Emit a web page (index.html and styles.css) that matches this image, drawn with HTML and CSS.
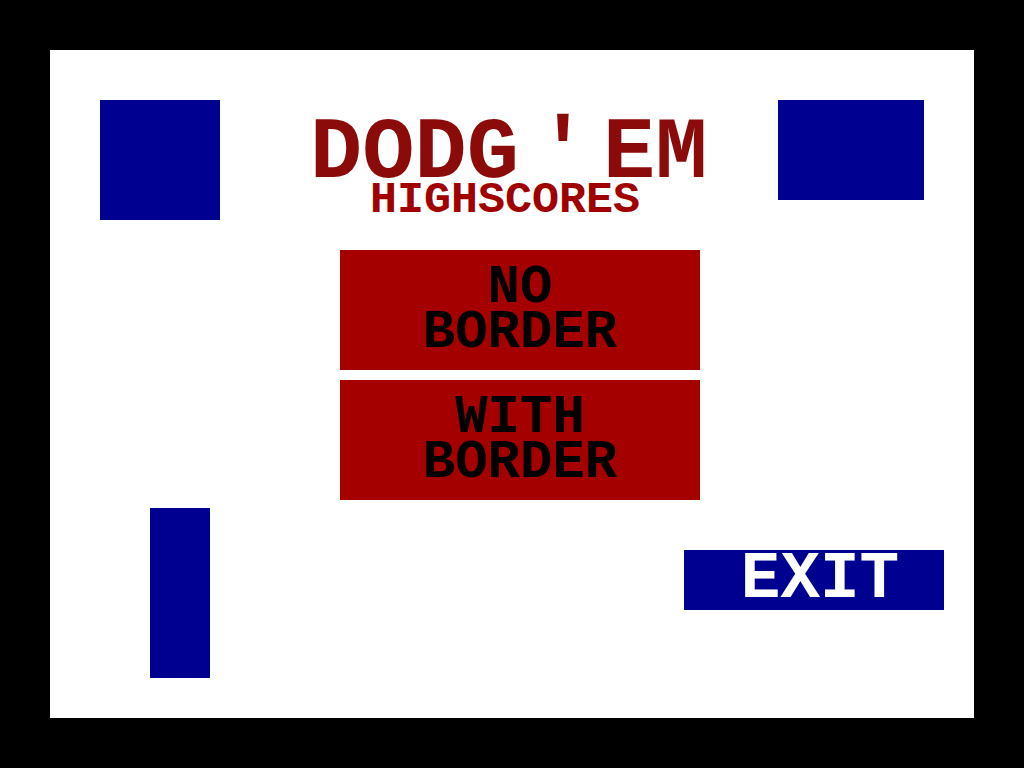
FILE: index.html
```html
<!DOCTYPE html>
<html>
<head>
<meta charset="utf-8">
<link rel="stylesheet" href="styles.css">
</head>
<body>
<div class="panel">
  <div class="block block-a"></div>
  <div class="block block-b"></div>
  <div class="block block-c"></div>
  <header class="header">
    <h1 class="title"><span>DODG</span><span class="apos">'</span><span class="em">EM</span></h1>
    <h2 class="subtitle">HIGHSCORES</h2>
  </header>
  <div class="menu">
    <button class="menu-btn"><span>NO</span><span>BORDER</span></button>
    <button class="menu-btn"><span>WITH</span><span>BORDER</span></button>
  </div>
  <button class="exit-btn">EXIT</button>
</div>
</body>
</html>
```
FILE: styles.css
```css
html, body {
  margin: 0;
  padding: 0;
  background: #000;
}
body {
  width: 1024px;
  height: 768px;
  overflow: hidden;
  font-family: "Liberation Mono", "Courier New", monospace;
  font-weight: bold;
}
.panel {
  position: relative;
  width: 924px;
  height: 668px;
  margin: 50px;
  background: #fff;
  display: flex;
  flex-direction: column;
}
.block {
  position: absolute;
  background: #000090;
}
.block-a { left: 50px; top: 50px; width: 120px; height: 120px; }
.block-b { left: 728px; top: 50px; width: 146px; height: 100px; }
.block-c { left: 100px; top: 458px; width: 60px; height: 170px; }

.header {
  padding-top: 74px;
  display: flex;
  flex-direction: column;
}
.title {
  margin: 0;
  padding-left: 260px;
  display: flex;
  font-size: 87px;
  line-height: 60px;
  font-weight: bold;
  color: #8b0a0a;
}
.title .apos { margin-left: 18px; }
.title .em { margin-left: 14px; }
.subtitle {
  margin: 0;
  padding-left: 320px;
  font-size: 45px;
  line-height: 34px;
  font-weight: bold;
  color: #a00000;
}
.menu {
  margin: 32px 0 0 290px;
  width: 360px;
  display: flex;
  flex-direction: column;
  gap: 10px;
}
.menu-btn {
  height: 120px;
  border: 0;
  padding: 0;
  background: #a50000;
  color: #000;
  font-family: inherit;
  font-weight: bold;
  font-size: 54px;
  line-height: 45px;
  display: flex;
  flex-direction: column;
  align-items: center;
  justify-content: center;
}
.exit-btn {
  align-self: flex-end;
  margin: 50px 30px 0 0;
  width: 260px;
  height: 60px;
  border: 0;
  padding: 0 0 0 12px;
  background: #000090;
  color: #fff;
  font-family: inherit;
  font-weight: bold;
  font-size: 66px;
  line-height: 60px;
}
```
